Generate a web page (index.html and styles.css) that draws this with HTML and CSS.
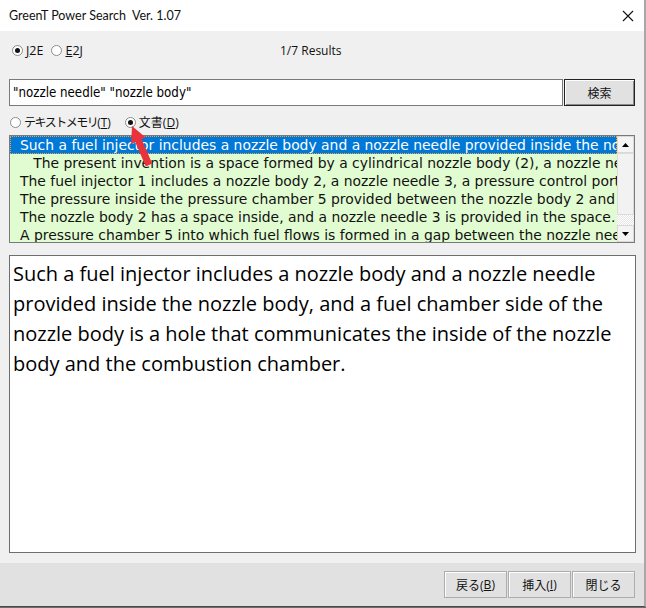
FILE: index.html
```html
<!DOCTYPE html>
<html lang="ja">
<head>
    <meta charset="UTF-8">
    <meta name="viewport" content="width=device-width, initial-scale=1.0">
    <title>GreenT Power Search</title>
    <link rel="stylesheet" href="styles.css">
</head>
<body>
    <div class="window">
        <div class="titlebar">
            <span class="title">GreenT Power Search  Ver. 1.07</span>
            <svg class="close" width="12" height="12" viewBox="0 0 12 12">
                <path d="M1 1 L11 11 M11 1 L1 11" stroke="#111" stroke-width="1.1" fill="none"/>
            </svg>
        </div>

        <div class="client">
            <div class="langRow">
                <div class="langGroup">
                    <span class="radio on"></span><span class="lbl"><u>J</u>2E</span>
                    <span class="radio"></span><span class="lbl"><u>E</u>2J</span>
                </div>
                <div class="results">1/7 Results</div>
            </div>

            <div class="searchRow">
                <div class="searchBox">"nozzle needle" "nozzle body"</div>
                <div class="btn default">検索</div>
            </div>

            <div class="sourceRow">
                <span class="radio"></span><span class="lbl jp"><span class="kana">テキストメモリ</span>(<u>T</u>)</span>
                <span class="radio on second"></span><span class="lbl jp">文書(<u>D</u>)</span>
            </div>

            <div class="list">
                <div class="items">
                    <div class="item selected">Such a fuel injector includes a nozzle body and a nozzle needle provided inside the nozzle body</div>
                    <div class="item">&nbsp;&nbsp;&nbsp;The present invention is a space formed by a cylindrical nozzle body (2), a nozzle needle (3)</div>
                    <div class="item">The fuel injector 1 includes a nozzle body 2, a nozzle needle 3, a pressure control portion</div>
                    <div class="item">The pressure inside the pressure chamber 5 provided between the nozzle body 2 and the needle</div>
                    <div class="item">The nozzle body 2 has a space inside, and a nozzle needle 3 is provided in the space.</div>
                    <div class="item">A pressure chamber 5 into which fuel flows is formed in a gap between the nozzle needle 3</div>
                </div>
                <div class="scrollbar">
                    <div class="sbBtn">
                        <svg width="7" height="4" viewBox="0 0 7 4"><path d="M0 4 L3.5 0 L7 4 Z" fill="#000"/></svg>
                    </div>
                    <div class="thumb"></div>
                    <div class="track"></div>
                    <div class="sbBtn">
                        <svg width="7" height="4" viewBox="0 0 7 4"><path d="M0 0 L7 0 L3.5 4 Z" fill="#000"/></svg>
                    </div>
                </div>
            </div>

            <div class="detail">
                Such a fuel injector includes a nozzle body and a nozzle needle<br>
                provided inside the nozzle body, and a fuel chamber side of the<br>
                nozzle body is a hole that communicates the inside of the nozzle<br>
                body and the combustion chamber.
            </div>
        </div>

        <div class="footer">
            <div class="btn">戻る(<u>B</u>)</div>
            <div class="btn">挿入(<u>I</u>)</div>
            <div class="btn">閉じる</div>
        </div>

        <svg class="pointer" width="646" height="608" viewBox="0 0 646 608">
            <polygon points="132,126 145.7,137.5 141.6,139.3 152.2,163.6 145.8,166.4 135.2,142.1 131.1,143.9" fill="#e8323c"/>
        </svg>
    </div>
</body>
</html>
```

FILE: styles.css
```css
body{
    margin: 0;
    background-color: #6b6b6b;
    font-family: "Open Sans", "Noto Sans CJK JP", sans-serif;
}
.window{
    position: relative;
    width: 646px;
    height: 607px;
    box-sizing: border-box;
    border-right: 2px solid #a8a8a8;
    border-bottom: 1px solid #4a4a4a;
    background-color: #f0f0f0;
    overflow: hidden;
}
.titlebar{
    height: 31px;
    background-color: white;
    display: flex;
    align-items: center;
    justify-content: space-between;
    padding: 0 9px;
}
.title{
    font-family: "Lato", sans-serif;
    font-size: 12.5px;
    color: #111;
    white-space: pre;
}
.close{
    margin-right: 1px;
}
.client{
    padding: 0 8px 0 9px;
    height: 532px;
}
.lbl{
    font-size: 12px;
    color: #111;
}
.radio{
    display: inline-block;
    position: relative;
    width: 9px;
    height: 9px;
    border: 1px solid #8c8c8c;
    border-radius: 50%;
    background-color: white;
    margin-right: 3px;
}
.radio.on::after{
    content: "";
    position: absolute;
    left: 2px;
    top: 2px;
    width: 5px;
    height: 5px;
    border-radius: 50%;
    background-color: #111;
}
.langRow{
    height: 38px;
    display: flex;
    align-items: center;
}
.langGroup{
    width: 271px;
    display: flex;
    align-items: center;
    padding-left: 3px;
    box-sizing: border-box;
}
.langGroup .lbl{
    margin-right: 8px;
    font-size: 12.5px;
}
.results{
    font-size: 12px;
    color: #111;
}
.searchRow{
    margin-top: 10px;
    display: flex;
    height: 27px;
}
.searchBox{
    width: 554px;
    box-sizing: border-box;
    border: 1px solid #7a7a7a;
    background-color: white;
    font-family: "DejaVu Sans Condensed", "DejaVu Sans", sans-serif;
    font-size: 13.2px;
    line-height: 25px;
    padding-left: 3px;
    color: #000;
}
.btn{
    box-sizing: border-box;
    height: 27px;
    border: 1px solid #adadad;
    background-color: #e1e1e1;
    box-shadow: inset 1px 1px 0 #fdfdfd;
    font-size: 12px;
    color: #111;
    display: flex;
    align-items: center;
    justify-content: center;
}
.btn.default{
    width: 71px;
    margin-left: 1px;
    border: 1px solid #222;
    box-shadow: inset 1px 1px 0 #fdfdfd, inset -1px -1px 0 #8a8a8a;
}
.sourceRow{
    margin: 7px 0 4px;
    height: 18px;
    display: flex;
    align-items: center;
    padding-left: 1px;
}
.kana{
    letter-spacing: -1.5px;
}
.radio.second{
    margin-left: 14px;
}
.list{
    width: 626px;
    height: 108px;
    box-sizing: border-box;
    border: 1px solid #7a7a7a;
    display: flex;
    overflow: hidden;
}
.items{
    flex: 1;
    overflow: hidden;
    background-color: #e2fcd2;
}
.item{
    height: 18px;
    line-height: 18px;
    padding-left: 10px;
    white-space: nowrap;
    overflow: hidden;
    font-family: "DejaVu Sans", sans-serif;
    font-size: 13.9px;
    color: #111;
}
.item.selected{
    background-color: #0078d7;
    color: white;
    outline: 1px dotted #f2a33a;
    outline-offset: -1px;
}
.scrollbar{
    width: 17px;
    display: flex;
    flex-direction: column;
    background-color: #f0f0f0;
}
.sbBtn{
    height: 17px;
    box-sizing: border-box;
    border: 1px solid #d8d8d8;
    background-color: #f4f4f4;
    display: flex;
    align-items: center;
    justify-content: center;
}
.thumb{
    height: 62px;
    box-sizing: border-box;
    border: 1px solid #dcdcdc;
    background-color: #f2f2f2;
}
.track{
    flex: 1;
    background-color: #fafafa;
    background-image: repeating-conic-gradient(#e6e6e6 0 25%, #ffffff 0 50%);
    background-size: 2px 2px;
}
.detail{
    margin-top: 12px;
    width: 627px;
    height: 298px;
    box-sizing: border-box;
    border: 1px solid #6e6e6e;
    background-color: white;
    padding: 3px 0 0 3px;
    font-family: "Open Sans", sans-serif;
    font-size: 20px;
    line-height: 30px;
    color: #000;
    white-space: nowrap;
}
.footer{
    height: 43px;
    background-color: #e1e1e1;
    display: flex;
    justify-content: flex-end;
    align-items: center;
    padding-right: 9px;
    gap: 1px;
}
.footer .btn{
    width: 63px;
}
.pointer{
    position: absolute;
    left: 0;
    top: 0;
    pointer-events: none;
}
```
